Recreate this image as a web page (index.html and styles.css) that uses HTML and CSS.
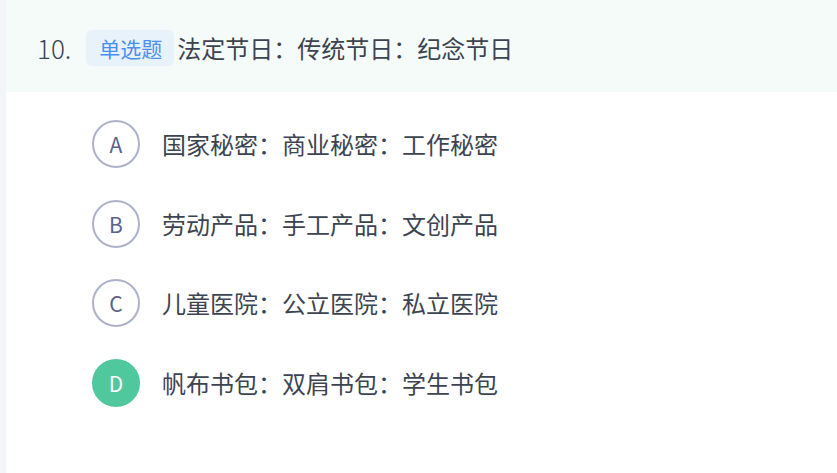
FILE: index.html
```html
<!DOCTYPE html>
<html lang="zh">
<head>
<meta charset="utf-8">
<link rel="stylesheet" href="styles.css">
</head>
<body>
<div class="page">
  <div class="question">
    <div class="q-head">
      <span class="q-num">10.</span>
      <span class="q-tag">单选题</span>
      <span class="q-title">法定节日：传统节日：纪念节日</span>
    </div>
    <ul class="options">
      <li class="option"><span class="opt-key">A</span><span class="opt-text">国家秘密：商业秘密：工作秘密</span></li>
      <li class="option"><span class="opt-key">B</span><span class="opt-text">劳动产品：手工产品：文创产品</span></li>
      <li class="option"><span class="opt-key">C</span><span class="opt-text">儿童医院：公立医院：私立医院</span></li>
      <li class="option selected"><span class="opt-key">D</span><span class="opt-text">帆布书包：双肩书包：学生书包</span></li>
    </ul>
  </div>
</div>
</body>
</html>
```

FILE: styles.css
```css
html, body {
  margin: 0;
  padding: 0;
  height: 100%;
}
body {
  background: #f3f5f9;
  font-family: "Noto Sans CJK SC", "Noto Sans", sans-serif;
  color: #3d4451;
}
.page {
  margin-left: 6px;
  height: 100%;
  background: #ffffff;
}
.q-head {
  height: 92px;
  box-sizing: border-box;
  padding: 4px 0 0 31px;
  background: #f5fbf9;
  display: flex;
  align-items: center;
}
.q-num {
  font-size: 26px;
  font-weight: 300;
  line-height: 1;
  margin-right: 15px;
  color: #3d4451;
}
.q-tag {
  display: inline-flex;
  align-items: center;
  height: 36px;
  padding: 0 12px 0 13px;
  box-sizing: border-box;
  border-radius: 6px;
  background: #e8f2fb;
  color: #4a8ff2;
  font-size: 21px;
  margin-right: 3px;
}
.q-title {
  font-size: 24px;
  line-height: 1;
  color: #3d4451;
}
.options {
  list-style: none;
  margin: 0;
  padding: 28px 0 0 86px;
  display: flex;
  flex-direction: column;
  gap: 31.5px;
}
.option {
  display: flex;
  align-items: center;
  height: 48px;
}
.opt-key {
  width: 48px;
  height: 48px;
  box-sizing: border-box;
  border: 2px solid #aeb2c9;
  border-radius: 50%;
  display: flex;
  align-items: center;
  justify-content: center;
  font-size: 21px;
  color: #5b6285;
  margin-right: 22px;
  flex: none;
}
.option.selected .opt-key {
  border-color: #4fc89e;
  background: #4fc89e;
  color: #ffffff;
}
.opt-text {
  font-size: 24px;
  line-height: 1;
  color: #3d4451;
}
```
